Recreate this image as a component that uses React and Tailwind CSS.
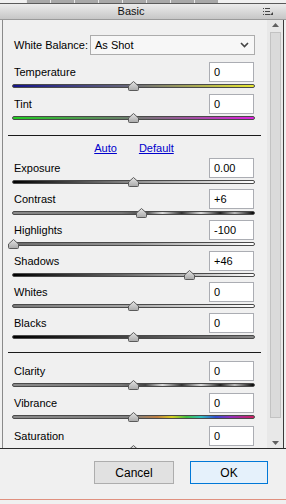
import React from "react";

const font = "font-['Liberation_Sans',Arial,sans-serif]";

function Thumb({ x }) {
  return (
    <svg
      className="absolute top-[-1px]"
      style={{ left: x - 5 }}
      width="11"
      height="10"
      viewBox="0 0 11 10"
    >
      <defs>
        <linearGradient id="tg" x1="0" y1="0" x2="0" y2="1">
          <stop offset="0" stopColor="#e4e4e4" />
          <stop offset="1" stopColor="#a9a9a9" />
        </linearGradient>
      </defs>
      <path d="M5.5 0.5 L10.5 5 L10.5 8.5 Q10.5 9.5 9.5 9.5 L1.5 9.5 Q0.5 9.5 0.5 8.5 L0.5 5 Z" fill="url(#tg)" stroke="#5a5a5a" strokeWidth="1" />
    </svg>
  );
}

function Row({ label, value, track, pos, h }) {
  return (
    <div className={h}>
      <div className="flex items-center justify-between h-[20px]">
        <span className="pl-[2px]">{label}</span>
        <div className="w-[45px] h-[20px] mr-[1px] bg-white border border-[#abadb3] pl-[4px] leading-[18px]">
          {value}
        </div>
      </div>
      <div className="relative h-[12px]">
        <div className={`absolute left-0 right-0 top-[2px] h-[4px] rounded-full border border-[#4a4a4a] ${track}`} />
        <Thumb x={pos} />
      </div>
    </div>
  );
}

export default function App() {
  return (
    <div className={`w-[286px] h-[504px] bg-[#f0f0f0] text-[11px] text-black overflow-hidden ${font}`}>
      {/* tabs strip */}
      <div className="flex h-[4px] border-b border-[#5a5a5a]">
        <div className="w-[26px] bg-[#f0f0f0]" />
        {[0, 1, 2, 3, 4, 5, 6, 7].map((i) => (
          <div key={i} className="w-[24px] bg-[#a8a8a8] border-l border-[#e8e8e8]" />
        ))}
        <div className="flex-1 bg-[#f0f0f0]" />
      </div>

      {/* header */}
      <div className="relative h-[16px] bg-[linear-gradient(to_bottom,#ececec,#c6c6c6)] border-b border-[#9a9a9a] flex items-center justify-center pr-[24px]">
        <span className="text-[#111]">Basic</span>
        <svg className="absolute right-[12px] top-[4px]" width="11" height="8" viewBox="0 0 11 8">
          <rect x="0" y="0" width="1" height="1" fill="#444" />
          <rect x="2" y="0" width="5" height="1" fill="#444" />
          <rect x="0" y="3" width="1" height="1" fill="#444" />
          <rect x="2" y="3" width="5" height="1" fill="#444" />
          <rect x="0" y="6" width="1" height="1" fill="#444" />
          <rect x="2" y="6" width="5" height="1" fill="#444" />
          <path d="M10 4 L10 7 L7 7 Z" fill="#444" />
        </svg>
      </div>

      {/* panel body */}
      <div className="flex h-[429px] border-b border-[#2a2a2a] overflow-hidden">
        <div className="ml-[2px] w-[1px] bg-[#8a8a8a]" />
        <div className="w-[243px] ml-[9px] pt-[15px]">
          <div className="flex items-center h-[20px]">
            <span className="pl-[2px] w-[78px]">White Balance:</span>
            <div className="flex-1 h-[20px] border border-[#acacac] bg-[#f7f7f7] flex items-center justify-between pl-[4px] pr-[5px]">
              <span>As Shot</span>
              <svg width="9" height="6" viewBox="0 0 9 6">
                <path d="M1 1 L4.5 4.5 L8 1" fill="none" stroke="#444" strokeWidth="1.6" />
              </svg>
            </div>
          </div>

          <div className="mt-[7px]">
            <Row h="h-[32px]" label="Temperature" value="0" pos={121} track="bg-[linear-gradient(to_right,#15158a,#6a6a78_50%,#e8e832)]" />
            <Row h="h-[32px]" label="Tint" value="0" pos={121} track="bg-[linear-gradient(to_right,#22cc22,#6f7a6f_50%,#dd22dd)]" />
          </div>

          <div className="mt-[9px] -ml-[4px] w-[253px] h-[1px] bg-[#1a1a1a]" />

          <div className="h-[22px] flex items-center justify-center gap-[22px] pt-[2px] pl-[1px]">
            <span className="text-[#0000cc] underline">Auto</span>
            <span className="text-[#0000cc] underline">Default</span>
          </div>

          <Row h="h-[31px]" label="Exposure" value="0.00" pos={121} track="bg-[linear-gradient(to_right,#000,#555_30%,#9a9a9a_55%,#fff)]" />
          <Row h="h-[31px]" label="Contrast" value="+6" pos={129} track="bg-[linear-gradient(to_right,#8a8a8a,#777_45%,#444_55%,#ddd_62%,#333_70%,#ddd_78%,#222_86%,#bbb_92%,#000)]" />
          <Row h="h-[31px]" label="Highlights" value="-100" pos={1} track="bg-[linear-gradient(to_right,#6a6a6a,#9a9a9a_50%,#fff)]" />
          <Row h="h-[31px]" label="Shadows" value="+46" pos={177} track="bg-[linear-gradient(to_right,#000,#666_45%,#fff)]" />
          <Row h="h-[31px]" label="Whites" value="0" pos={121} track="bg-[linear-gradient(to_right,#777,#aaa_50%,#fff)]" />
          <Row h="h-[32px]" label="Blacks" value="0" pos={121} track="bg-[linear-gradient(to_right,#000,#3a3a3a_40%,#888)]" />

          <div className="mt-[7px] -ml-[4px] w-[253px] h-[1px] bg-[#1a1a1a]" />

          <div className="mt-[8px]">
            <Row h="h-[32px]" label="Clarity" value="0" pos={121} track="bg-[linear-gradient(to_right,#8a8a8a,#777_45%,#444_55%,#ddd_62%,#333_70%,#ddd_78%,#222_86%,#bbb_92%,#000)]" />
            <Row h="h-[33px]" label="Vibrance" value="0" pos={121} track="bg-[linear-gradient(to_right,#8a8a8a,#808080_50%,#c08040_60%,#d8d020_66%,#40c040_72%,#30c0c0_78%,#3050d0_84%,#9030c0_90%,#d02060)]" />
            <Row h="h-[32px]" label="Saturation" value="0" pos={121} track="bg-[linear-gradient(to_right,#888,#888)]" />
          </div>
        </div>

        {/* scrollbar */}
        <div className="ml-[12px] w-[16px] bg-[#e8e8e8] flex flex-col items-center">
          <svg className="mt-[3px]" width="7" height="4" viewBox="0 0 7 4">
            <path d="M0 4 L3.5 0 L7 4 Z" fill="#606060" />
          </svg>
          <div className="mt-[5px] w-[11px] h-[386px] bg-[#dadada] border border-[#c2c2c2]" />
          <div className="flex-1" />
          <svg className="mb-[3px]" width="7" height="4" viewBox="0 0 7 4">
            <path d="M0 0 L3.5 4 L7 0 Z" fill="#606060" />
          </svg>
        </div>
        <div className="w-[1px] bg-[#3a3a3a]" />
      </div>

      {/* buttons */}
      <div className="h-[50px] flex justify-end items-start pt-[12px] pr-[18px] gap-[16px]">
        <button className="w-[80px] h-[23px] bg-[#e1e1e1] border border-[#adadad] text-[12px]">Cancel</button>
        <button className="w-[78px] h-[23px] bg-[#e5f1fb] border border-[#0078d7] text-[12px]">OK</button>
      </div>
      <div className="h-[1px] bg-[#e0907f]" />
    </div>
  );
}
